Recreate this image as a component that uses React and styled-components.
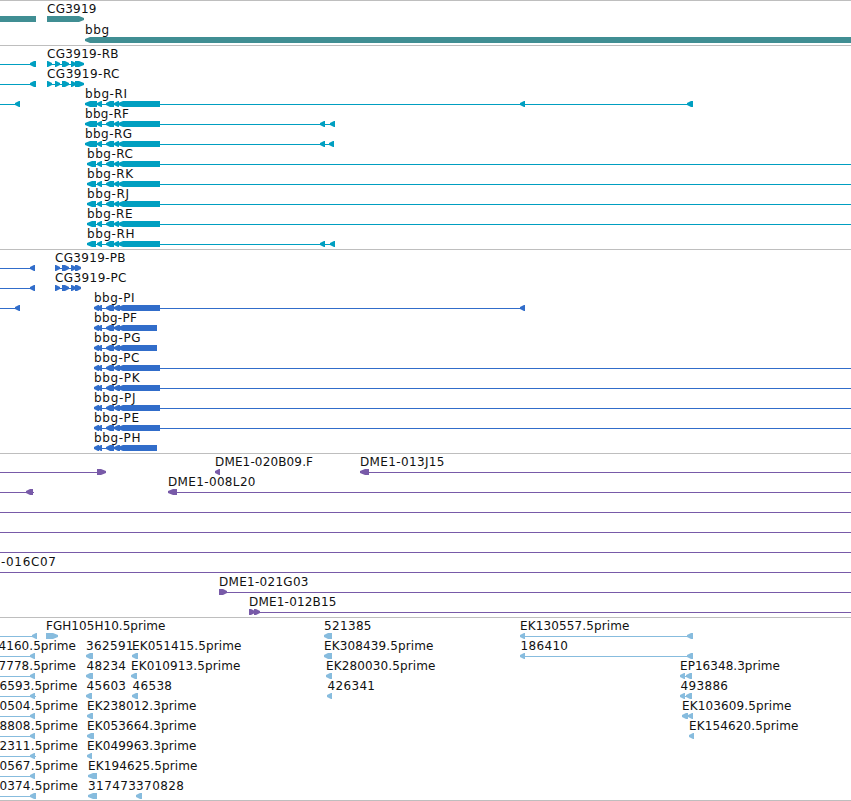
import styled, { createGlobalStyle } from 'styled-components';

const WIDTH = 851;

// labels: [text, x, length]
// glyphs: [start, end], pointing left unless a third value 'r' is given
// lines: [start, end]
const utr = (start, first) => [
  [start, first],
  [97, 102],
  [106, 114],
  [114, 119],
  [118, 160],
];
const cds = end => [
  [94, 99],
  [97, 102],
  [106, 114],
  [114, 120],
  [118, end],
];
const rbExons = [
  [47, 52, 'r'],
  [55, 60, 'r'],
  [62, 69, 'r'],
  [71, 76, 'r'],
  [75, 84, 'r'],
];
const pbExons = [
  [55, 60, 'r'],
  [62, 69, 'r'],
  [71, 76, 'r'],
  [75, 81, 'r'],
];

const longTranscript = (name, length) => ({
  labels: [[name, 87, length]],
  glyphs: utr(87, 96),
  lines: [[96, WIDTH]],
});
const longProtein = (name, length) => ({
  labels: [[name, 94, length]],
  glyphs: cds(160),
  lines: [[98, WIDTH]],
});
const shortProtein = (name, length) => ({
  labels: [[name, 94, length]],
  glyphs: cds(157),
  lines: [[98, 120]],
});

const tracks = [
  {
    name: 'gene',
    color: '#408e93',
    rows: [
      {
        tall: true,
        labels: [['CG3919', 47, 49.5]],
        glyphs: [[47, 84, 'r']],
        bars: [[0, 36]],
      },
      { labels: [['bbg', 85, 24]], glyphs: [[85, 860]] },
    ],
  },
  {
    name: 'mrna',
    color: '#009fc1',
    rows: [
      {
        labels: [['CG3919-RB', 47, 71.5]],
        glyphs: [[30, 36], ...rbExons],
        lines: [[0, 31], [47, 84]],
      },
      {
        labels: [['CG3919-RC', 47, 72.5]],
        glyphs: [[30, 36], ...rbExons],
        lines: [[0, 31], [47, 84]],
      },
      {
        labels: [['bbg-RI', 85, 42]],
        glyphs: [[15, 20], ...utr(85, 97), [520, 525], [687, 693]],
        lines: [[0, 15], [96, 690]],
      },
      {
        labels: [['bbg-RF', 85, 44]],
        glyphs: [...utr(85, 97), [320, 325], [330, 335]],
        lines: [[96, 332]],
      },
      {
        labels: [['bbg-RG', 85, 47]],
        glyphs: [...utr(85, 97), [320, 325], [329, 334]],
        lines: [[96, 331]],
      },
      longTranscript('bbg-RC', 46),
      longTranscript('bbg-RK', 46),
      longTranscript('bbg-RJ', 42),
      longTranscript('bbg-RE', 45.5),
      {
        labels: [['bbg-RH', 87, 47.5]],
        glyphs: [...utr(87, 96), [320, 325], [330, 335]],
        lines: [[96, 332]],
      },
    ],
  },
  {
    name: 'cds',
    color: '#316dca',
    rows: [
      {
        labels: [['CG3919-PB', 55, 70.5]],
        glyphs: [[30, 35], ...pbExons],
        lines: [[0, 31], [55, 81]],
      },
      {
        labels: [['CG3919-PC', 55, 71.5]],
        glyphs: [[30, 35], ...pbExons],
        lines: [[0, 31], [55, 81]],
      },
      {
        labels: [['bbg-PI', 94, 40.5]],
        glyphs: [[15, 20], ...cds(160), [520, 525]],
        lines: [[0, 15], [98, 522]],
      },
      shortProtein('bbg-PF', 43),
      shortProtein('bbg-PG', 46.5),
      longProtein('bbg-PC', 45.5),
      longProtein('bbg-PK', 45.5),
      longProtein('bbg-PJ', 41.5),
      longProtein('bbg-PE', 45),
      shortProtein('bbg-PH', 46.5),
    ],
  },
  {
    name: 'bac',
    color: '#785aa8',
    rows: [
      {
        labels: [['DME1-020B09.F', 215, 98], ['DME1-013J15', 360, 84.5]],
        glyphs: [[97, 106, 'r'], [215, 220], [360, 369]],
        lines: [[0, 98], [368, WIDTH]],
      },
      {
        labels: [['DME1-008L20', 168, 87.5]],
        glyphs: [[26, 33], [168, 177]],
        lines: [[0, 34], [176, WIDTH]],
      },
      { lines: [[0, WIDTH]] },
      { lines: [[0, WIDTH]] },
      { lines: [[0, WIDTH]] },
      { labels: [['-016C07', 1, 55]], lines: [[0, WIDTH]] },
      {
        labels: [['DME1-021G03', 219, 89.5]],
        glyphs: [[219, 227, 'r']],
        lines: [[220, WIDTH]],
      },
      {
        labels: [['DME1-012B15', 249, 87.5]],
        glyphs: [[249, 255, 'r'], [254, 260, 'r']],
        lines: [[250, WIDTH]],
      },
    ],
  },
  {
    name: 'est',
    color: '#87bcde',
    rows: [
      {
        labels: [
          ['FGH105H10.5prime', 46, 119.5],
          ['521385', 324, 47.5],
          ['EK130557.5prime', 520, 109.5],
        ],
        glyphs: [[32, 37], [46, 58, 'r'], [324, 332], [520, 525], [687, 693]],
        lines: [[0, 32], [524, 690]],
      },
      {
        labels: [
          ['4160.5prime', -1.5, 77.5],
          ['362591', 86, 47.5],
          ['EK051415.5prime', 132, 109.5],
          ['EK308439.5prime', 324, 109.5],
          ['186410', 520.5, 47.5],
        ],
        glyphs: [[30, 35], [86, 93], [132, 138], [324, 332], [520, 525], [687, 693]],
        lines: [[0, 31], [524, 690]],
      },
      {
        labels: [
          ['7778.5prime', -1.5, 77.5],
          ['48234', 86.5, 39.5],
          ['EK010913.5prime', 131, 109.5],
          ['EK280030.5prime', 326, 109.5],
          ['EP16348.3prime', 680, 100],
        ],
        glyphs: [[30, 35], [86, 93], [131, 137], [326, 332], [680, 685], [686, 692]],
        lines: [[0, 31], [684, 688]],
      },
      {
        labels: [
          ['6593.5prime', -0.5, 78],
          ['45603', 86.5, 39.5],
          ['46538', 132.5, 39.5],
          ['426341', 327.5, 47.5],
          ['493886', 680.5, 47.5],
        ],
        glyphs: [[30, 35], [86, 92], [132, 138], [327, 332], [680, 685], [686, 692]],
        lines: [[0, 36], [684, 688]],
      },
      {
        labels: [
          ['0504.5prime', -0.5, 78.5],
          ['EK238012.3prime', 87, 109.5],
          ['EK103609.5prime', 682, 109.5],
        ],
        glyphs: [[30, 35], [87, 93], [682, 688], [688, 693]],
        lines: [[0, 31], [684, 690]],
      },
      {
        labels: [
          ['8808.5prime', -0.5, 78.5],
          ['EK053664.3prime', 87, 109.5],
          ['EK154620.5prime', 689, 109.5],
        ],
        glyphs: [[30, 35], [87, 94], [689, 694]],
        lines: [[0, 31]],
      },
      {
        labels: [
          ['2311.5prime', -0.5, 78.5],
          ['EK049963.3prime', 87, 109.5],
        ],
        glyphs: [[30, 35], [87, 92]],
        lines: [[0, 36]],
      },
      {
        labels: [
          ['0567.5prime', -0.5, 78.5],
          ['EK194625.5prime', 88, 109.5],
        ],
        glyphs: [[30, 35], [88, 97]],
        lines: [[0, 31]],
      },
      {
        labels: [
          ['0374.5prime', -0.5, 78.5],
          ['317473', 88, 48],
          ['370828', 136, 48],
        ],
        glyphs: [[30, 36], [88, 97], [136, 142]],
        lines: [[0, 31]],
      },
    ],
  },
];

// blunt two pixel tip widening to the full bar height
const glyphPoints = (start, end, direction) => {
  const head = end - start > 8 ? 5 : 4;
  if (direction === 'r') {
    return `${start},14 ${end - head},14 ${end},16 ${end},18 ${end - head},20 ${start},20`;
  }
  return `${end},14 ${start + head},14 ${start},16 ${start},18 ${start + head},20 ${end},20`;
};

const Feature = ({ row }) => {
  const { tall, labels = [], glyphs = [], lines = [], bars = [] } = row;
  return (
    <Row $tall={tall}>
      {lines.map(([start, end]) => (
        <rect key={start} x={start} y="17" width={end - start} height="1" />
      ))}
      {bars.map(([start, end]) => (
        <rect key={start} x={start} y="14" width={end - start} height="6" />
      ))}
      {glyphs.map(([start, end, direction]) => (
        <Glyph key={start} points={glyphPoints(start, end, direction)} />
      ))}
      {labels.map(([text, x, length]) => (
        <Label key={text} x={x} y="11" textLength={length}>
          {text}
        </Label>
      ))}
    </Row>
  );
};

export default () => (
  <>
    <GlobalStyle />
    <Browser>
      {tracks.map(track => (
        <Track key={track.name} $color={track.color}>
          {track.rows.map((row, i) => (
            <Feature key={i} row={row} />
          ))}
        </Track>
      ))}
    </Browser>
  </>
);

const GlobalStyle = createGlobalStyle`
  body {
    margin: 0;
    background: #fff;
  }
`;

const Browser = styled.main`
  width: ${WIDTH}px;
  overflow: hidden;
`;

const Track = styled.section`
  display: flex;
  flex-direction: column;
  padding: 1px 0 2px;
  border-top: 1px solid #bebebe;
  color: ${props => props.$color};
  &:last-child {
    padding-bottom: 1px;
    border-bottom: 1px solid #bebebe;
  }
`;

const Row = styled.svg`
  display: block;
  width: 100%;
  height: ${props => (props.$tall ? 21 : 20)}px;
  fill: currentColor;
  shape-rendering: crispEdges;
`;

const Glyph = styled.polygon`
  shape-rendering: geometricPrecision;
`;

const Label = styled.text`
  font-family: 'DejaVu Sans', sans-serif;
  font-size: 12px;
  fill: #111;
`;
